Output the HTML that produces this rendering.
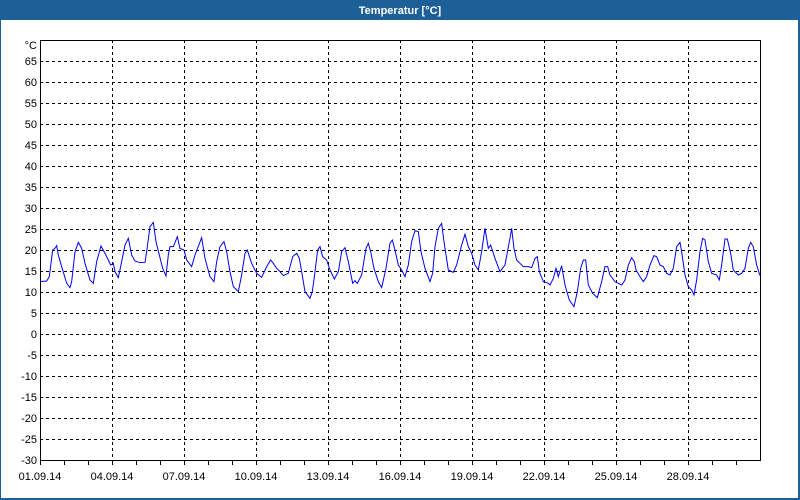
<!DOCTYPE html>
<html><head><meta charset="utf-8"><style>
html,body{margin:0;padding:0;width:800px;height:500px;overflow:hidden;background:#fff}
svg{display:block}
text{font-family:"Liberation Sans",sans-serif;font-size:11px;fill:#000}
</style></head><body>
<svg width="800" height="500" xmlns="http://www.w3.org/2000/svg">
<rect x="0" y="0" width="800" height="500" fill="#1d5f97"/>
<rect x="1" y="20" width="797" height="478" fill="#fff"/>
<text x="400" y="14" text-anchor="middle" style="font-weight:bold;fill:#fff;font-size:11px">Temperatur [°C]</text>
<g stroke="#000" stroke-width="1" stroke-dasharray="3,3" shape-rendering="crispEdges">
<path d="M40 61.5H760M40 82.5H760M40 103.5H760M40 124.5H760M40 145.5H760M40 166.5H760M40 187.5H760M40 208.5H760M40 229.5H760M40 250.5H760M40 271.5H760M40 292.5H760M40 313.5H760M40 334.5H760M40 355.5H760M40 376.5H760M40 397.5H760M40 418.5H760M40 439.5H760"/>
<path d="M112.5 40V460M184.5 40V460M256.5 40V460M328.5 40V460M400.5 40V460M472.5 40V460M544.5 40V460M616.5 40V460M688.5 40V460"/>
</g>
<g stroke="#000" stroke-width="1" fill="none" shape-rendering="crispEdges">
<rect x="40.5" y="40.5" width="720" height="420"/>
<path d="M64.5 461v4M88.5 461v4M112.5 461v4M136.5 461v4M160.5 461v4M184.5 461v4M208.5 461v4M232.5 461v4M256.5 461v4M280.5 461v4M304.5 461v4M328.5 461v4M352.5 461v4M376.5 461v4M400.5 461v4M424.5 461v4M448.5 461v4M472.5 461v4M496.5 461v4M520.5 461v4M544.5 461v4M568.5 461v4M592.5 461v4M616.5 461v4M640.5 461v4M664.5 461v4M688.5 461v4M712.5 461v4M736.5 461v4M40.5 461v4"/>
</g>
<g text-anchor="end">
<text x="37" y="49">°C</text>
<text x="37" y="65">65</text><text x="37" y="86">60</text><text x="37" y="107">55</text><text x="37" y="128">50</text><text x="37" y="149">45</text><text x="37" y="170">40</text><text x="37" y="191">35</text><text x="37" y="212">30</text><text x="37" y="233">25</text><text x="37" y="254">20</text><text x="37" y="275">15</text><text x="37" y="296">10</text><text x="37" y="317">5</text><text x="37" y="338">0</text><text x="37" y="359">-5</text><text x="37" y="380">-10</text><text x="37" y="401">-15</text><text x="37" y="422">-20</text><text x="37" y="443">-25</text><text x="37" y="464">-30</text>
</g>
<g text-anchor="middle">
<text x="40" y="480">01.09.14</text><text x="112" y="480">04.09.14</text><text x="184" y="480">07.09.14</text><text x="256" y="480">10.09.14</text><text x="328" y="480">13.09.14</text><text x="400" y="480">16.09.14</text><text x="472" y="480">19.09.14</text><text x="544" y="480">22.09.14</text><text x="616" y="480">25.09.14</text><text x="688" y="480">28.09.14</text>
</g>
<g fill="none" stroke="#0000ee" stroke-width="1">
<polyline vector-effect="non-scaling-stroke" transform="translate(40,215) scale(0.3333)" points="0,200 20,198 28,185 38,105 45,100 50,92 55,120 65,155 80,205 90,218 95,200 105,110 115,82 125,100 135,145 150,195 160,205 170,140 183,93 195,115 205,135 212,150 220,145 225,170 235,188 245,140 255,90 265,70 275,120 285,138 300,143 315,142 320,110 330,35 340,22 348,80 358,120 368,160 378,183 385,120 390,95 400,95 412,65 420,100 432,105 440,135 455,155 465,120 485,68 495,130 510,185 522,200 530,140 540,95 552,80 560,110 570,170 580,215 595,230 605,180 615,115 622,105 635,145 650,175 665,187 680,155 692,135 700,145 710,160 720,170"/>
<polyline vector-effect="non-scaling-stroke" transform="translate(280,215) scale(0.3333)" points="0,170 10,182 25,175 38,125 50,115 58,130 65,170 75,230 90,250 97,230 105,170 113,105 120,95 128,125 140,135 150,165 163,192 175,170 185,110 195,98 205,140 218,205 225,197 232,205 245,180 258,100 265,85 272,110 282,160 295,200 305,218 318,160 330,85 337,75 345,105 355,150 365,165 375,185 385,150 395,80 405,47 415,50 423,110 435,160 450,200 458,175 465,95 475,40 485,25 492,80 505,165 520,172 530,150 545,90 555,58 565,95 575,115 585,150 595,165 605,110 615,40 625,100 632,90 645,130 660,170 675,150 690,70 695,40 702,100 710,135 720,145"/>
<polyline vector-effect="non-scaling-stroke" transform="translate(520,215) scale(0.3333)" points="0,145 10,155 25,155 35,158 45,130 52,125 58,170 70,200 85,205 90,210 100,190 108,160 115,185 125,152 135,210 148,255 162,275 172,230 182,160 190,135 197,135 205,210 218,235 232,248 245,200 255,155 263,155 270,180 285,200 295,205 305,210 315,195 325,150 335,128 343,140 348,165 360,185 370,200 380,185 390,150 402,122 410,125 420,150 430,155 440,175 450,180 460,160 470,95 480,82 485,110 495,180 505,215 515,225 522,240 530,195 540,110 548,70 555,75 565,140 575,175 590,180 598,195 605,150 615,72 622,72 632,115 640,165 655,180 665,175 675,160 685,100 692,82 700,95 710,150 720,182"/>
</g>
</svg>
</body></html>
